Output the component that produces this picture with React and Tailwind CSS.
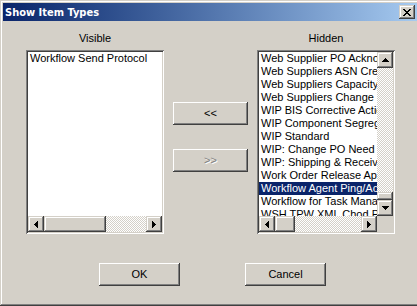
const raised =
  "shadow-[inset_-1px_-1px_#404040,inset_1px_1px_#ffffff,inset_-2px_-2px_#808080,inset_2px_2px_#d4d0c8]";
const scrollRaised =
  "shadow-[inset_-1px_-1px_#404040,inset_1px_1px_#d4d0c8,inset_-2px_-2px_#808080,inset_2px_2px_#ffffff]";
const sunken =
  "shadow-[inset_1px_1px_#808080,inset_-1px_-1px_#ffffff,inset_2px_2px_#404040,inset_-2px_-2px_#d4d0c8]";
const track =
  "bg-[image:repeating-conic-gradient(#ffffff_0_25%,#d4d0c8_0_50%)] bg-[length:2px_2px]";

const hiddenItems = [
  "Web Supplier PO Acknowledgement",
  "Web Suppliers ASN Creation",
  "Web Suppliers Capacity Update",
  "Web Suppliers Change PO Request",
  "WIP BIS Corrective Action",
  "WIP Component Segregation",
  "WIP Standard",
  "WIP: Change PO Need By Date",
  "WIP: Shipping & Receiving",
  "Work Order Release Approval",
  "Workflow Agent Ping/Acknowledge",
  "Workflow for Task Management",
  "WSH TPW XML Chod Process",
];

// tiny pixel glyphs for the scroll arrows
function Arrow({ dir }) {
  const rows = [0, 1, 2, 3];
  if (dir === "up" || dir === "down") {
    return (
      <svg width="7" height="4" viewBox="0 0 7 4" shapeRendering="crispEdges">
        {rows.map((i) => {
          const r = dir === "up" ? i : 3 - i;
          return <rect key={i} x={3 - r} y={i} width={r * 2 + 1} height="1" fill="#000" />;
        })}
      </svg>
    );
  }
  return (
    <svg width="4" height="7" viewBox="0 0 4 7" shapeRendering="crispEdges">
      {rows.map((i) => {
        const r = dir === "left" ? i : 3 - i;
        return <rect key={i} x={i} y={3 - r} width="1" height={r * 2 + 1} fill="#000" />;
      })}
    </svg>
  );
}

function ScrollBtn({ dir }) {
  return (
    <div className={`w-[16px] h-[16px] shrink-0 bg-[#d4d0c8] flex items-center justify-center ${scrollRaised}`}>
      <Arrow dir={dir} />
    </div>
  );
}

function HScroll({ thumb }) {
  return (
    <div className="flex h-[16px] flex-1">
      <ScrollBtn dir="left" />
      <div className={`h-[16px] shrink-0 bg-[#d4d0c8] ${scrollRaised}`} style={{ width: thumb }} />
      <div className={`flex-1 ${track}`} />
      <ScrollBtn dir="right" />
    </div>
  );
}

function Button({ children, wide, disabled }) {
  return (
    <div
      className={`h-[23px] flex items-center justify-center bg-[#d4d0c8] ${raised} ${wide ? "w-[81px]" : "w-[75px]"} ${
        disabled ? "text-[#808080] [text-shadow:1px_1px_#ffffff]" : ""
      }`}
    >
      {children}
    </div>
  );
}

export default function App() {
  return (
    <div className="w-[417px] h-[306px] overflow-hidden bg-[#d4d0c8] text-black text-[11px] leading-[13px] font-['Liberation_Sans',Arial,sans-serif]">
      <div className="w-[420px] h-[306px] flex flex-col pt-[3px] px-[3px] shadow-[inset_-1px_-1px_#404040,inset_1px_1px_#d4d0c8,inset_-2px_-2px_#808080,inset_2px_2px_#ffffff]">
        {/* title bar */}
        <div className="h-[18px] flex items-center justify-between bg-linear-to-r from-[#0a246a] to-[#a6caf0]">
          <span className="pl-[2px] text-white font-bold text-[11px] leading-[13px] font-['DejaVu_Sans_Condensed','DejaVu_Sans',sans-serif]">
            Show Item Types
          </span>
          <div className={`mr-[2px] w-[16px] h-[14px] bg-[#d4d0c8] flex items-center justify-center ${scrollRaised}`}>
            <svg width="8" height="7" viewBox="0 0 8 7" shapeRendering="crispEdges">
              <path d="M0 0h2v1H0zM6 0h2v1H6zM1 1h2v1H1zM5 1h2v1H5zM2 2h4v1H2zM3 3h2v1H3zM2 4h4v1H2zM1 5h2v1H1zM5 5h2v1H5zM0 6h2v1H0zM6 6h2v1H6z" fill="#000" />
            </svg>
          </div>
        </div>

        <div className="flex pl-[23px]">
          {/* visible */}
          <div className="w-[138px] flex flex-col">
            <div className="mt-[11px] h-[13px] text-center">Visible</div>
            <div className={`mt-[5px] h-[184px] p-[2px] flex flex-col ${sunken}`}>
              <div className="h-[164px] bg-white overflow-hidden">
                <div className="h-[13px] pl-[2px] whitespace-nowrap">Workflow Send Protocol</div>
              </div>
              <HScroll thumb={62} />
            </div>
          </div>

          {/* move buttons */}
          <div className="ml-[9px] flex flex-col pt-[81px] gap-[24px]">
            <Button>&lt;&lt;</Button>
            <Button disabled>&gt;&gt;</Button>
          </div>

          {/* hidden */}
          <div className="ml-[9px] w-[138px] flex flex-col">
            <div className="mt-[11px] h-[13px] text-center">Hidden</div>
            <div className={`mt-[5px] h-[184px] p-[2px] flex flex-col ${sunken}`}>
              <div className="h-[164px] flex">
                <div className="w-[118px] bg-white overflow-hidden">
                  {hiddenItems.map((item, i) => (
                    <div
                      key={item}
                      className={`h-[13px] pl-[2px] whitespace-nowrap ${i === 10 ? "bg-[#0a246a] text-white" : ""}`}
                    >
                      {item}
                    </div>
                  ))}
                </div>
                <div className="w-[16px] flex flex-col">
                  <ScrollBtn dir="up" />
                  <div className={`flex-1 ${track}`} />
                  <div className={`h-[8px] bg-[#d4d0c8] ${scrollRaised}`} />
                  <ScrollBtn dir="down" />
                </div>
              </div>
              <div className="flex">
                <HScroll thumb={20} />
                <div className="w-[16px] h-[16px] bg-[#d4d0c8]" />
              </div>
            </div>
          </div>
        </div>

        <div className="flex pl-[96px] gap-[65px] mt-[29px]">
          <Button wide>OK</Button>
          <Button wide>Cancel</Button>
        </div>
      </div>
    </div>
  );
}
